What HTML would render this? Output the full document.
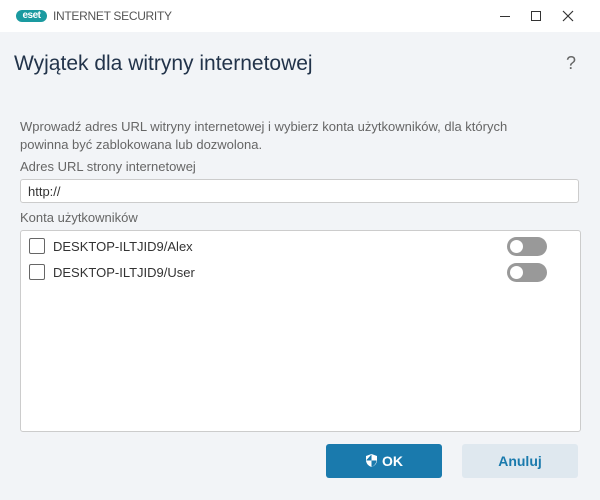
<!DOCTYPE html>
<html><head><meta charset="utf-8"><style>
*{margin:0;padding:0;box-sizing:border-box}
body{width:600px;height:500px;background:#f2f4f7;font-family:"Liberation Sans",sans-serif;position:relative;overflow:hidden;color:#333}
.tb{position:absolute;left:0;top:0;width:600px;height:32px;background:#fff}
.abs{position:absolute}
.logo{left:16px;top:10px;width:31px;height:12px;background:#1a9aa0;border-radius:6px;color:#fff;font-size:10px;font-weight:bold;line-height:12px;text-align:center;letter-spacing:-0.5px}
.t{font-size:13px}
.cb{position:absolute;left:29px;width:16px;height:16px;border:1.5px solid #666;border-radius:2px;background:#fff}
.tg{position:absolute;left:507px;width:40px;height:19px;border-radius:10px;background:#999}
.tg::after{content:"";position:absolute;left:3px;top:3px;width:13px;height:13px;border-radius:50%;background:#fff}
</style></head><body>
<div class="tb"></div>
<div class="abs logo">eset</div>
<div class="abs" style="left:53px;top:9px;font-size:12px;color:#555;letter-spacing:-0.3px">INTERNET SECURITY</div>
<div class="abs" style="left:500px;top:16px;width:10px;height:1px;background:#333"></div>
<div class="abs" style="left:531px;top:11px;width:10px;height:10px;border:1px solid #333"></div>
<svg class="abs" style="left:562px;top:10px" width="12" height="12"><path d="M1 1L11 11M11 1L1 11" stroke="#333" stroke-width="1.2"/></svg>
<div class="abs" style="left:14px;top:52px;font-size:21px;color:#22334a">Wyjątek dla witryny internetowej</div>
<div class="abs" style="left:566px;top:53px;font-size:18px;color:#666">?</div>
<div class="abs t" style="left:20px;top:118px;width:525px;line-height:18px;color:#666">Wprowadź adres URL witryny internetowej i wybierz konta użytkowników, dla których powinna być zablokowana lub dozwolona.</div>
<div class="abs t" style="left:20px;top:159px;color:#666">Adres URL strony internetowej</div>
<div class="abs" style="left:20px;top:179px;width:559px;height:24px;background:#fff;border:1px solid #ccc;border-radius:3px;font-size:13px;padding:4px 0 0 7px">http://</div>
<div class="abs t" style="left:20px;top:210px;color:#666">Konta użytkowników</div>
<div class="abs" style="left:20px;top:230px;width:561px;height:202px;background:#fff;border:1px solid #ccc;border-radius:3px"></div>
<div class="cb" style="top:238px"></div><div class="abs t" style="left:53px;top:239px">DESKTOP-ILTJID9/Alex</div>
<div class="cb" style="top:264px"></div><div class="abs t" style="left:53px;top:265px">DESKTOP-ILTJID9/User</div>
<div class="tg" style="top:237px"></div><div class="tg" style="top:263px"></div>
<div class="abs" style="left:326px;top:444px;width:116px;height:34px;background:#1a7aad;border-radius:3px;color:#fff;font-size:14px;font-weight:bold;line-height:34px;text-align:center">
<svg width="13" height="15" viewBox="0 0 13 15" style="vertical-align:-2px;margin-right:4px"><path d="M6.5 1L12 3v4c0 3.5-2.5 6-5.5 7C3.5 13 1 10.5 1 7V3z" fill="#fff"/><path d="M6.5 1.5V7.5H1.5v-0.5M6.5 7.5h5c-0.3 3-2.5 5.5-5 6.5z" fill="#1a7aad"/></svg>OK</div>
<div class="abs" style="left:462px;top:444px;width:116px;height:34px;background:#dfe8ef;border-radius:3px;color:#1a7aad;font-size:14px;font-weight:bold;line-height:34px;text-align:center">Anuluj</div>
</body></html>
